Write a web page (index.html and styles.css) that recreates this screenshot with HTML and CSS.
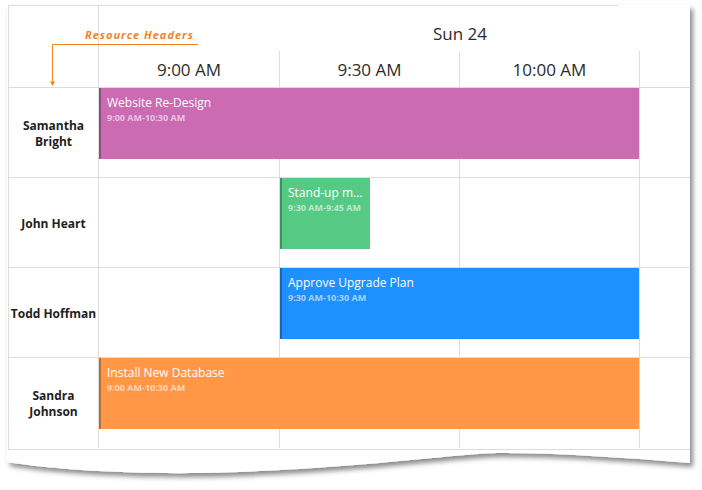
FILE: index.html
```html
<!DOCTYPE html>
<html>
<head>
<meta charset="utf-8">
<link rel="stylesheet" href="styles.css">
</head>
<body>
<div class="page">
  <svg class="paper" width="702" height="490" viewBox="0 0 702 490">
    <defs>
      <filter id="sh" x="-5%" y="-5%" width="115%" height="115%">
        <feDropShadow dx="3" dy="4" stdDeviation="2.6" flood-color="#000" flood-opacity="0.45"/>
      </filter>
    </defs>
    <path filter="url(#sh)" fill="#fff" d="M7,5 L690,5 L690,463 C630,458 560,453 500,453 C460,453 350,470 200,473 C120,474 50,469 7,462 Z"/>
  </svg>

  <div class="scheduler">
    <div class="header">
      <div class="corner"></div>
      <div class="date">Sun 24</div>
      <div class="time">9:00 AM</div>
      <div class="time">9:30 AM</div>
      <div class="time">10:00 AM</div>
      <div class="time blank"></div>
    </div>

    <div class="row">
      <div class="resource">Samantha Bright</div>
      <div class="slot c1"></div><div class="slot c2"></div><div class="slot c3"></div><div class="slot c4"></div>
      <div class="appt purple from-900 to-1030">
        <div class="title">Website Re-Design</div>
        <div class="when">9:00 AM-10:30 AM</div>
      </div>
    </div>

    <div class="row">
      <div class="resource">John Heart</div>
      <div class="slot c1"></div><div class="slot c2"></div><div class="slot c3"></div><div class="slot c4"></div>
      <div class="appt green from-930 to-945">
        <div class="title">Stand-up m...</div>
        <div class="when">9:30 AM-9:45 AM</div>
      </div>
    </div>

    <div class="row">
      <div class="resource">Todd Hoffman</div>
      <div class="slot c1"></div><div class="slot c2"></div><div class="slot c3"></div><div class="slot c4"></div>
      <div class="appt blue from-930 to-1030">
        <div class="title">Approve Upgrade Plan</div>
        <div class="when">9:30 AM-10:30 AM</div>
      </div>
    </div>

    <div class="row last-row">
      <div class="resource">Sandra Johnson</div>
      <div class="slot c1"></div><div class="slot c2"></div><div class="slot c3"></div><div class="slot c4"></div>
      <div class="appt orange from-900 to-1030">
        <div class="title">Install New Database</div>
        <div class="when">9:00 AM-10:30 AM</div>
      </div>
    </div>
  </div>

  <div class="callout">
    <svg class="callout-lines" width="160" height="70" viewBox="0 0 160 70">
      <path d="M4.5,16.5 H150 M4.5,16.5 V54" stroke="#f5821f" stroke-width="1" fill="none"/>
      <polygon points="2,53.5 7,53.5 4.5,58" fill="#f5821f"/>
    </svg>
    <span class="callout-text">Resource Headers</span>
  </div>
</div>
</body>
</html>
```

FILE: styles.css
```css
html, body {
  margin: 0;
  padding: 0;
  background: #fff;
}

.page {
  position: relative;
  width: 702px;
  height: 490px;
  overflow: hidden;
  isolation: isolate;
  font-family: "Open Sans", "Noto Sans", sans-serif;
  color: #333;
}

.paper {
  position: absolute;
  left: 0;
  top: 0;
  z-index: -1;
}

.scheduler {
  margin: 5px 0 0 8px;
  width: 681px;
  border-left: 1px solid #dcdcdc;
  border-bottom: 1px solid #dcdcdc;
  padding-bottom: 1px;
}

.header {
  display: grid;
  grid-template-columns: 90px 181px 180px 180px 50px;
  grid-template-rows: 46px 36px;
  border-bottom: 1px solid #dcdcdc;
  background: linear-gradient(#dcdcdc, #dcdcdc) no-repeat 0 0 / 609px 1px;
}

.corner {
  grid-column: 1;
  grid-row: 1 / 3;
  border-right: 1px solid #dcdcdc;
}

.date {
  grid-column: 3 / 5;
  grid-row: 1;
  text-align: center;
  font-size: 17px;
  padding-top: 17px;
  color: #2b2b2b;
}

.time {
  grid-row: 2;
  border-right: 1px solid #dcdcdc;
  display: flex;
  align-items: center;
  justify-content: center;
  font-size: 17px;
  color: #2b2b2b;
}

.time.blank {
  border-right: none;
}

.row {
  display: grid;
  grid-template-columns: 90px 91px 90px 90px 90px 90px 90px 50px;
  grid-template-rows: 89px;
  border-bottom: 1px solid #dcdcdc;
}

.row.last-row {
  grid-template-rows: 90px;
  border-bottom: none;
}

.resource {
  grid-column: 1;
  grid-row: 1;
  border-right: 1px solid #dcdcdc;
  display: flex;
  align-items: center;
  justify-content: center;
  text-align: center;
  padding: 2px 1px 0;
  font-weight: 700;
  font-size: 12px;
  line-height: 16px;
  color: #1e1e1e;
}

.slot {
  grid-row: 1;
  border-right: 1px solid #dcdcdc;
}

.slot.c1 { grid-column: 2 / 4; }
.slot.c2 { grid-column: 4 / 6; }
.slot.c3 { grid-column: 6 / 8; }
.slot.c4 { grid-column: 8 / 9; border-right: none; }

.appt {
  grid-row: 1;
  align-self: start;
  height: 71px;
  box-sizing: border-box;
  border-left: 2px solid rgba(0, 0, 0, 0.28);
  padding: 6px 6px 0;
  color: #fff;
  overflow: hidden;
  white-space: nowrap;
}

.from-900 { grid-column-start: 2; }
.from-930 { grid-column-start: 4; }
.to-945 { grid-column-end: 5; }
.to-1030 { grid-column-end: 8; margin-right: 1px; }

.purple { background-color: #cb6bb2; }
.green { background-color: #56ca85; }
.blue { background-color: #1e90ff; }
.orange { background-color: #ff9747; }

.title {
  font-size: 12px;
  line-height: 17px;
}

.when {
  font-size: 9px;
  font-weight: 700;
  line-height: 12px;
  margin-top: 1px;
  color: rgba(255, 255, 255, 0.62);
}

.callout {
  position: absolute;
  left: 48px;
  top: 28px;
  width: 160px;
  height: 70px;
}

.callout-lines {
  display: block;
}

.callout-text {
  position: absolute;
  left: 37px;
  top: -1px;
  font-size: 11px;
  font-weight: 700;
  font-style: italic;
  letter-spacing: 1px;
  color: #f5821f;
  white-space: nowrap;
}
```
